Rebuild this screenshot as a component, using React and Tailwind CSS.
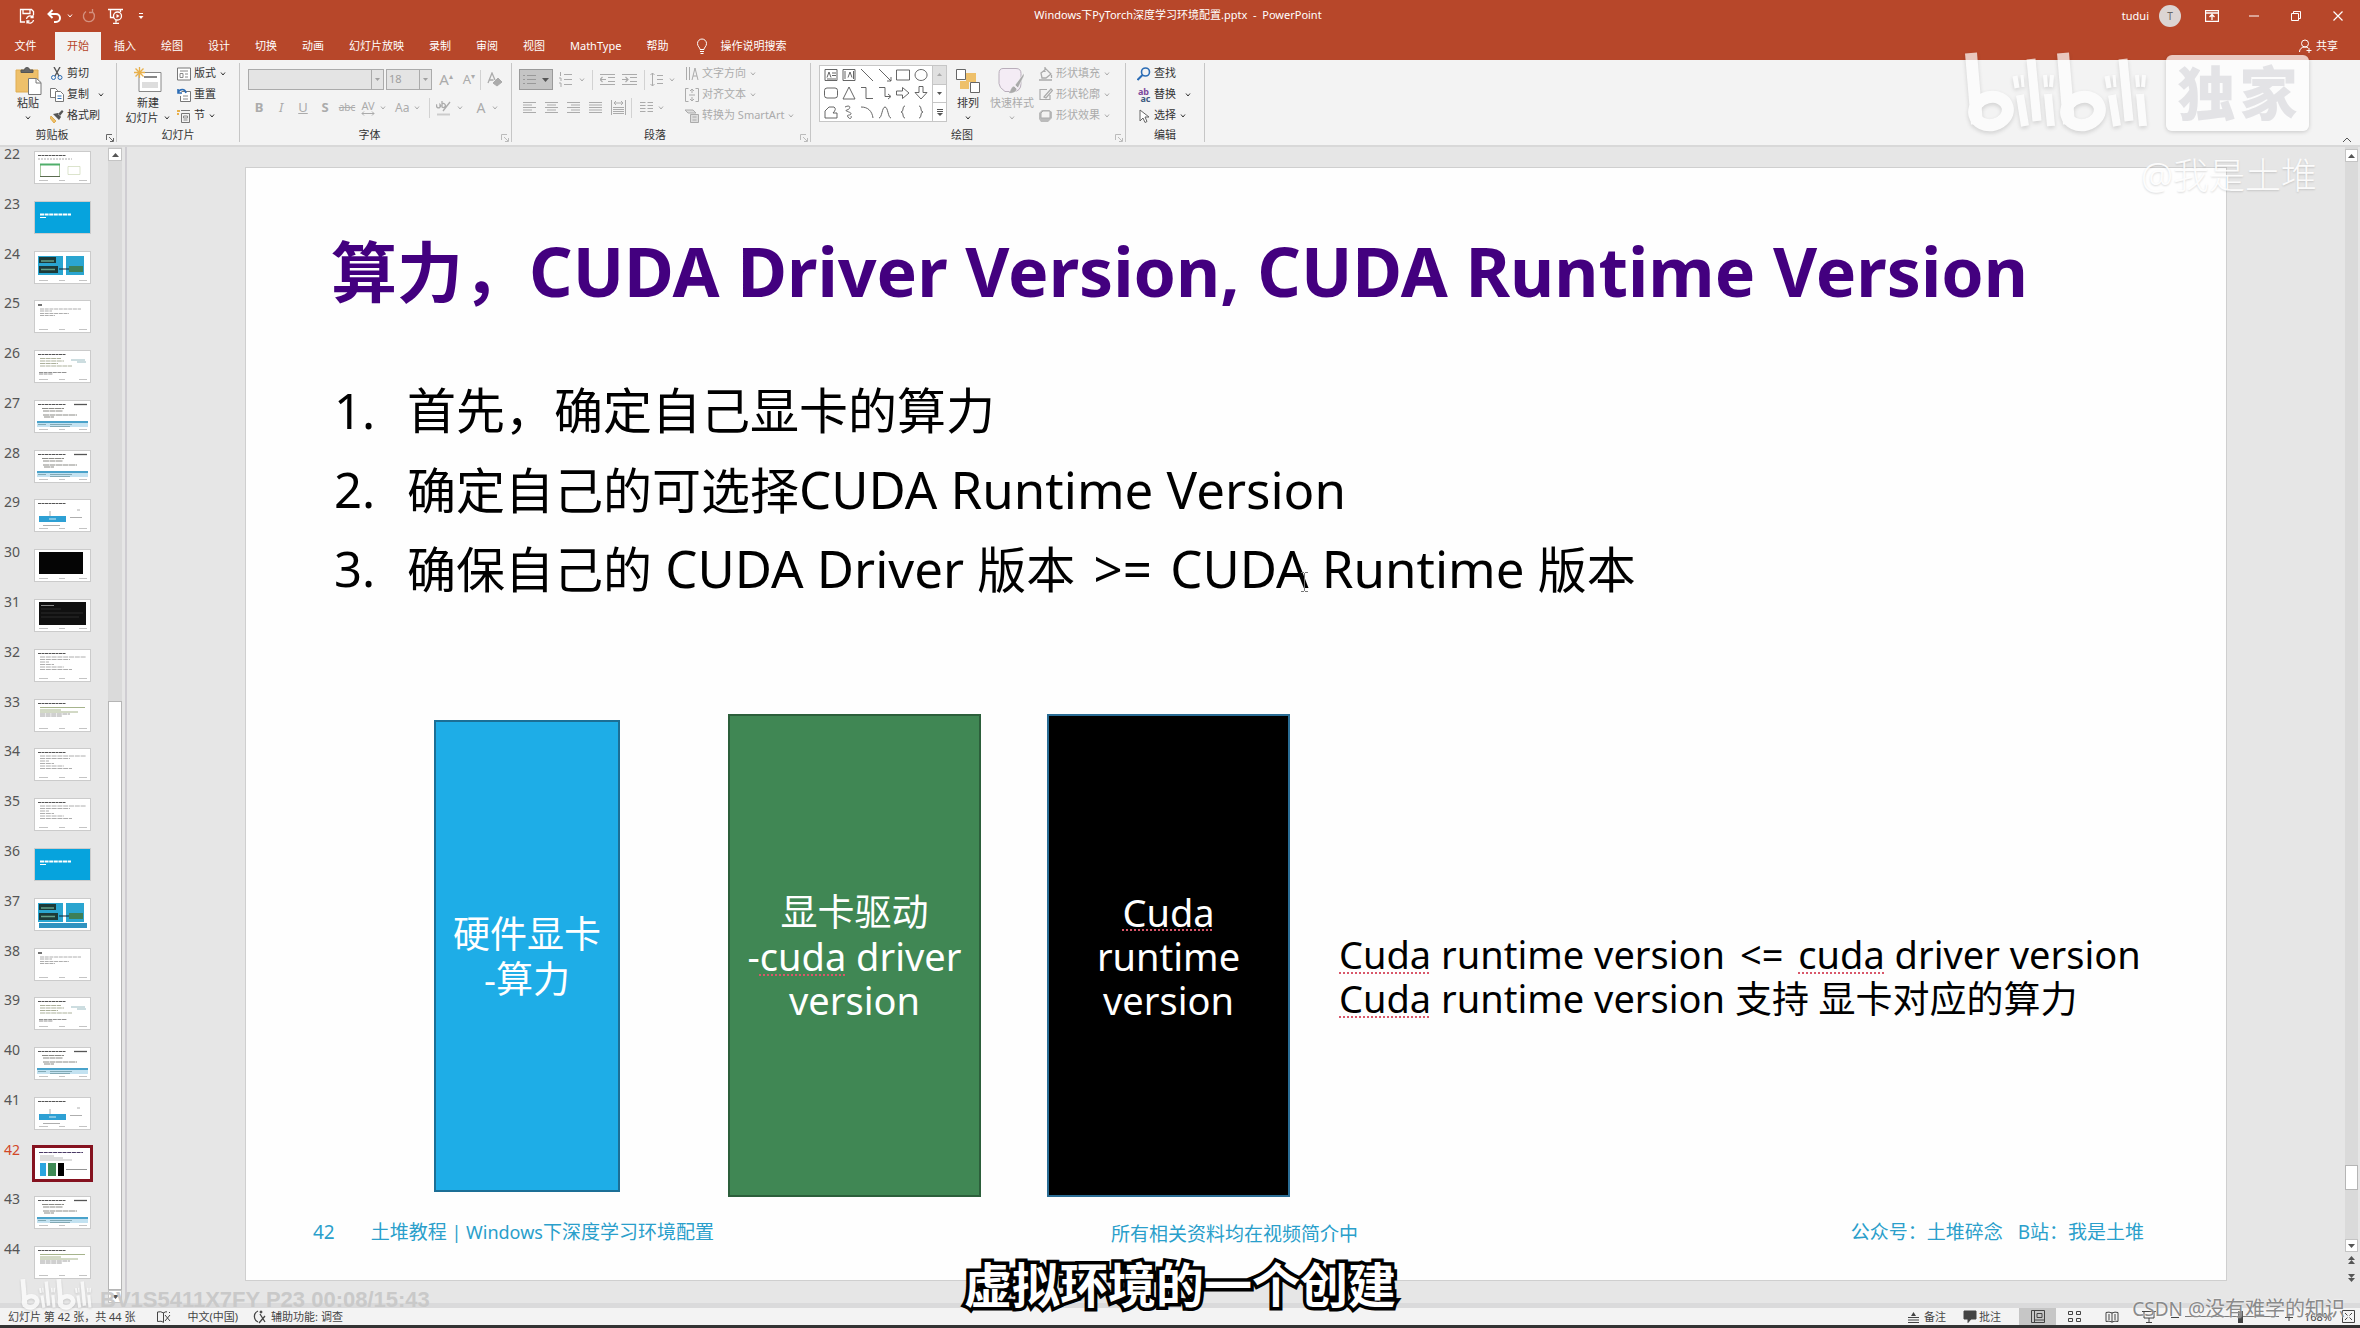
import clsx from 'clsx'

const TABS = ['插入', '绘图', '设计', '切换', '动画', '幻灯片放映', '录制', '审阅', '视图', 'MathType', '帮助']

const SLIDES = [
  [22, 'sheet'], [23, 'cover'], [24, 'arch'], [25, 'short'], [26, 'note'], [27, 'table'], [28, 'table'], [29, 'box'],
  [30, 'black'], [31, 'console'], [32, 'text'], [33, 'green'], [34, 'text'], [35, 'text'], [36, 'cover'], [37, 'archTable'],
  [38, 'short'], [39, 'note'], [40, 'table'], [41, 'box'], [42, 'current'], [43, 'table'], [44, 'green'],
]

function Icon({ w = 14, h = 14, vb, className, children }) {
  return (
    <svg
      width={w}
      height={h}
      viewBox={vb || `0 0 ${w} ${h}`}
      className={clsx('shrink-0', className)}
      fill="none"
      stroke="currentColor"
      strokeWidth="1"
      aria-hidden="true"
    >
      {children}
    </svg>
  )
}

function Chevron({ className }) {
  return (
    <Icon w={8} h={6} className={className}>
      <path d="M2 1.500 4 4l2-2.500" />
    </Icon>
  )
}

/* ---------- title bar ---------- */

function TitleBar() {
  return (
    <header className="relative flex h-8 items-center bg-[#b7472a] text-[11px] text-white">
      <div className="flex items-center pl-[19px]">
        <button aria-label="保存">
          <Icon w={16} h={16}>
            <path d="M6 14H1.500V1.500h11L14.500 3.500V7M4 1.500v4h7v-4" strokeWidth="1.300" />
            <path d="M7.500 11a3.500 3.500 0 0 1 6-2M14 7v2.500h-2.500M14.500 12a3.500 3.500 0 0 1-6 2M8 15.500V13h2.500" strokeWidth="1.300" />
          </Icon>
        </button>
        <button aria-label="撤消" className="ml-3 flex items-center gap-1">
          <Icon w={15} h={14}>
            <path d="M5.500 1 1.500 5l4 4M2 5h7a4 4 0 0 1 0 8H7" strokeWidth="2" />
          </Icon>
          <Chevron />
        </button>
        <button aria-label="重复" className="ml-2 opacity-40">
          <Icon w={14} h={14}>
            <path d="M4 2.500a5.500 5.500 0 1 0 6.500.5M10.500 0v3.500H7" strokeWidth="1.300" />
          </Icon>
        </button>
        <button aria-label="从头开始" className="ml-3">
          <Icon w={16} h={16}>
            <path d="M0 1.500h15M2.500 2v7.500H6M12.500 2v2M8 12v2.500M5 15.500h6" strokeWidth="1.300" />
            <circle cx="9.500" cy="8" r="4" strokeWidth="1.300" />
            <path d="m8.500 6 3 2-3 2z" fill="currentColor" stroke="none" />
          </Icon>
        </button>
        <button aria-label="自定义快速访问工具栏" className="ml-3">
          <Icon w={10} h={10}>
            <path d="M3 2.500h4" />
            <path d="M2.500 5h5L5 8z" fill="currentColor" stroke="none" />
          </Icon>
        </button>
      </div>
      <div className="pointer-events-none absolute inset-x-0 top-0 flex h-[30px] items-center justify-center pr-1 whitespace-pre">
        {'Windows下PyTorch深度学习环境配置.pptx  -  PowerPoint'}
      </div>
      <div className="mr-px ml-auto flex h-7 items-center">
        <span>tudui</span>
        <span className="mx-[10px] flex size-[22px] items-center justify-center rounded-full bg-[#dcd5d3] text-[10px] text-[#666]">T</span>
        <button aria-label="功能区显示选项" className="flex w-[42px] justify-center">
          <Icon w={14} h={12}>
            <path d="M.5.500h13v11H.500zM.500 3h13M7 10V5M4.500 7 7 4.500 9.500 7" strokeWidth="1.300" />
          </Icon>
        </button>
        <button aria-label="最小化" className="flex w-[42px] justify-center">
          <Icon w={10} h={10}><path d="M0 5h10" /></Icon>
        </button>
        <button aria-label="向下还原" className="flex w-[42px] justify-center">
          <Icon w={10} h={10}><path d="M.5 2.500h7v7h-7zM2.500 2V.500h7v7H8" /></Icon>
        </button>
        <button aria-label="关闭" className="flex w-[42px] justify-center">
          <Icon w={10} h={10}><path d="m.5.500 9 9m0-9-9 9" strokeWidth="1.200" /></Icon>
        </button>
      </div>
    </header>
  )
}

function TabBar() {
  return (
    <nav className="flex h-7 items-stretch bg-[#b7472a] text-[11px] text-white">
      <button className="w-[55px] pr-1">文件</button>
      <button className="bg-[#f3f2f1] px-3 text-[#b7472a]">开始</button>
      {TABS.map(t => (
        <button key={t} className="pr-3 pl-[13px]">{t}</button>
      ))}
      <button className="ml-4 flex items-center gap-3">
        <Icon w={12} h={16}>
          <path d="M4 11.500c0-2-2.500-3-2.500-6a4.500 4.500 0 0 1 9 0c0 3-2.500 4-2.500 6zM4 13.500h4M4.500 15.500h3" />
        </Icon>
        操作说明搜索
      </button>
      <button className="mr-[22px] ml-auto flex items-center gap-1">
        <Icon w={13} h={14}>
          <circle cx="6" cy="4.500" r="3.500" />
          <path d="M.5 13c0-3 2-5 5.500-5 1.500 0 2.500.4 3.300 1M7.500 11.500h5M10 9v5" />
        </Icon>
        共享
      </button>
    </nav>
  )
}

/* ---------- ribbon ---------- */

function Group({ label, launcher, dim, className, children }) {
  return (
    <section aria-label={label} className={clsx('relative my-[3px] flex shrink-0 flex-col border-r border-[#c6c6c6]', className)}>
      <div className="flex h-[65px] items-start">{children}</div>
      <div className={clsx('pt-px text-center leading-[15px] text-[#333]', launcher && 'pr-3')}>{label}</div>
      {launcher && (
        <button aria-label={`${label}设置`} className={clsx('absolute right-[2px] bottom-0', dim ? 'text-[#bbb]' : 'text-[#666]')}>
          <Icon w={8} h={8}><path d="M.5 6V.500H6M3 3l4 4M7.500 4v3.500H4" /></Icon>
        </button>
      )}
    </section>
  )
}

function BigButton({ icon, label, label2, dim, className }) {
  return (
    <button className={clsx('flex flex-col items-center pt-1 whitespace-nowrap', dim ? 'text-[#ababab]' : 'text-[#333]', className)}>
      <span className="flex h-7 items-center">{icon}</span>
      <span className="leading-4">{label}</span>
      <span className="flex h-[14px] items-center gap-1 leading-[14px]">
        {label2}
        <Chevron />
      </span>
    </button>
  )
}

function SmallButton({ icon, label, arrow, dim, far }) {
  return (
    <button className={clsx('flex h-[21px] items-center gap-[3px] whitespace-nowrap', dim ? 'text-[#ababab]' : 'text-[#333]')}>
      <span className="flex w-[15px] justify-center">{icon}</span>
      {label}
      {arrow && <Chevron className={far && 'ml-[5px]'} />}
    </button>
  )
}

function Combo({ label, value, className }) {
  return (
    <div className={clsx('relative h-[21px]', className)}>
      <select aria-label={label} disabled className="size-full appearance-none border border-[#ababab] bg-[#e4e4e4] pl-[2px] text-[11px] text-[#a0a0a0]">
        <option>{value}</option>
      </select>
      <span className="pointer-events-none absolute inset-y-0 right-0 flex w-[13px] items-center justify-center border border-[#ababab] text-[#a0a0a0]">
        <Icon w={5} h={3}><path d="M0 0h5L2.500 3z" fill="currentColor" stroke="none" /></Icon>
      </span>
    </div>
  )
}

function Sep({ className }) {
  return <span className={clsx('h-5 w-px bg-[#d2d2d2]', className)} />
}

function Tool({ label, className, children }) {
  return (
    <button aria-label={label} className={clsx('flex h-[21px] shrink-0 items-center justify-center', className)}>
      {children}
    </button>
  )
}

function Lines({ rows, w = 14 }) {
  return (
    <Icon w={w} h={13}>
      {rows.map(([x, len], i) => <path key={i} d={`M${x} ${1.5 + i * 2.5}h${len}`} />)}
    </Icon>
  )
}

function ClipboardGroup() {
  return (
    <Group label="剪贴板" launcher className="w-[117px]">
      <BigButton
        className="ml-3 w-8"
        label="粘贴"
        icon={
          <Icon w={27} h={28}>
            <path d="M1 3h22v22H1z" fill="#eec06a" stroke="#e0ad52" />
            <path d="M6 5.500V3h3.500a2.500 2.500 0 0 1 5 0H18v2.500z" fill="#666" stroke="#555" />
            <path d="M13.500 11.500h8l4.500 4v12H13.500z" fill="#fff" stroke="#777" />
            <path d="M21 11.500V16h5" stroke="#777" />
          </Icon>
        }
      />
      <div className="ml-[5px] flex flex-col items-start">
        <SmallButton
          label="剪切"
          icon={
            <Icon>
              <path d="m4 0 5 9M10 0 5 9" stroke="#555" strokeWidth="1.400" />
              <circle cx="3.500" cy="10.500" r="2" stroke="#2b6cb5" />
              <circle cx="10" cy="10.500" r="2" stroke="#2b6cb5" />
            </Icon>
          }
        />
        <SmallButton
          label="复制"
          arrow
          far
          icon={
            <Icon>
              <path d="M.5.500h5l2 2v7h-7z" fill="#fff" stroke="#777" />
              <path d="M5.500 3.500h5l3 3v7h-8z" fill="#fff" stroke="#777" />
              <path d="M7.500 8h4M7.500 10.500h4" stroke="#2b6cb5" />
            </Icon>
          }
        />
        <SmallButton
          label="格式刷"
          icon={
            <Icon>
              <path d="m1 7 5 5-2 2-4-5z" fill="#eec06a" stroke="#e0ad52" />
              <path d="m3 5 6 6 2-3-3-4zM8 5l4-4 1.500 1.500L10 7z" fill="#555" stroke="none" />
            </Icon>
          }
        />
      </div>
    </Group>
  )
}

function SlidesGroup() {
  return (
    <Group label="幻灯片" className="w-[123px]">
      <BigButton
        className="ml-[9px] w-11"
        label="新建"
        label2="幻灯片"
        icon={
          <Icon w={28} h={28}>
            <path d="M5 5.500h22v19H5z" fill="#fff" stroke="#888" />
            <path d="M10 10h13" stroke="#888" strokeWidth="2" />
            <path d="M8 15h16v6H8z" fill="#ddd" stroke="none" />
            <path d="M5.500 0v11M0 5.500h11M1.500 1.500l8 8m0-8-8 8" stroke="#e8b04b" strokeWidth="1.300" />
          </Icon>
        }
      />
      <div className="ml-[6px] flex flex-col items-start">
        <SmallButton
          label="版式"
          arrow
          icon={
            <Icon>
              <path d="M.5 1h13v12H.500z" fill="#fff" stroke="#777" />
              <path d="M3 4h8M3 6.500h3v4H3zM8 7h3M8 10h3" stroke="#888" />
            </Icon>
          }
        />
        <SmallButton
          label="重置"
          icon={
            <Icon>
              <path d="M4.500 3.500h9v10h-10V8" fill="#fff" stroke="#777" />
              <path d="M1 4.500C3 .5 8 .5 9 5M1 1v4h4" stroke="#2b6cb5" strokeWidth="1.600" />
              <path d="M6 8h5M6 11h5" stroke="#888" />
            </Icon>
          }
        />
        <SmallButton
          label="节"
          arrow
          icon={
            <Icon>
              <path d="M4 1.500h9M4.500 4.500h8v9h-8z" stroke="#777" />
              <path d="M6.500 7h4v2h-4zM6.500 11h4" stroke="#888" />
              <path d="M0 2h3M0 5h2" stroke="#e8b04b" strokeWidth="2" />
            </Icon>
          }
        />
      </div>
    </Group>
  )
}

function FontGroup() {
  return (
    <Group label="字体" launcher dim className="w-[272px]">
      <div className="flex flex-col gap-[7px] pt-[6px] pl-2 text-[#ababab]">
        <div className="flex items-center">
          <Combo label="字体" value="" className="w-[136px]" />
          <Combo label="字号" value="18" className="ml-[2px] w-[46px]" />
          <Tool label="增大字号" className="ml-[6px] w-4 text-[15px]">A<sup className="text-[8px]">▴</sup></Tool>
          <Tool label="减小字号" className="ml-[7px] w-4 text-[13px]">A<sup className="text-[8px]">▾</sup></Tool>
          <Sep className="ml-[3px]" />
          <Tool label="清除格式" className="ml-[6px]">
            <Icon w={16} h={16}>
              <path d="m1 11 4-10 3 7M2.500 8h4" strokeWidth="1.300" />
              <path d="m6 11 5-5 4 4-5 4z" fill="currentColor" />
            </Icon>
          </Tool>
        </div>
        <div className="flex items-center text-[13px]">
          <Tool label="加粗" className="w-[22px] font-bold">B</Tool>
          <Tool label="倾斜" className="w-[22px] italic">I</Tool>
          <Tool label="下划线" className="w-[22px] underline">U</Tool>
          <Tool label="阴影" className="w-[22px] font-bold">S</Tool>
          <Tool label="删除线" className="w-[22px] text-[10px] line-through">abc</Tool>
          <Tool label="字符间距" className="ml-[3px] text-[11px]">
            <span className="flex flex-col items-center leading-[11px]">
              AV
              <Icon w={14} h={5}><path d="M1 2.500h12M3 .5 1 2.500l2 2M11 .5l2 2-2 2" /></Icon>
            </span>
            <Chevron className="ml-1" />
          </Tool>
          <Tool label="更改大小写" className="ml-2 text-[12px]">Aa<Chevron className="ml-1" /></Tool>
          <Sep className="ml-2" />
          <Tool label="突出显示" className="ml-[6px]">
            <Icon w={16} h={16}>
              <path d="M1 4.500a2 2 0 1 0 3 0v3M6 1v6a2 2 0 1 0 0-3M7 11l7-9" strokeWidth="1.300" />
              <path d="M1 14.500h13" strokeWidth="2" stroke="#ccc" />
            </Icon>
            <Chevron className="ml-1" />
          </Tool>
          <Tool label="字体颜色" className="ml-3 text-[14px]">A<Chevron className="ml-[6px]" /></Tool>
        </div>
      </div>
    </Group>
  )
}

function ParagraphGroup() {
  return (
    <Group label="段落" launcher dim className="w-[299px]">
      <div className="flex w-[166px] shrink-0 flex-col gap-[7px] pt-[6px] pl-[7px] text-[#ababab]">
        <div className="flex items-center">
          <Tool label="项目符号" className="w-[34px] gap-[5px] border border-[#9a9a9a] bg-[#c5c5c5] text-[#999]">
            <Icon w={14} h={13}><path d="M0 2.500h2M4 2.500h9M0 6.500h2M4 6.500h9M0 10.500h2M4 10.500h9" /></Icon>
            <Icon w={7} h={4}><path d="M0 0h7L3.500 4z" fill="#555" stroke="none" /></Icon>
          </Tool>
          <Tool label="编号" className="ml-[6px] gap-[5px]">
            <Icon w={14} h={15}><path d="M1.500 0v4M0 6h2v3M0 11h2v4M5 2.500h8M5 7.500h8M5 12.500h8" /></Icon>
            <Chevron />
          </Tool>
          <Sep className="ml-[6px]" />
          <Tool label="减少缩进" className="ml-[7px]">
            <Icon w={15} h={13}><path d="M0 1.500h15M8 4.500h7M8 8.500h7M0 11.500h15M0 6.500h6M2.500 4 0 6.500 2.500 9" strokeWidth="1.200" /></Icon>
          </Tool>
          <Tool label="增加缩进" className="ml-[7px]">
            <Icon w={15} h={13}><path d="M0 1.500h15M8 4.500h7M8 8.500h7M0 11.500h15M0 6.500h6M3.500 4 6 6.500 3.500 9" strokeWidth="1.200" /></Icon>
          </Tool>
          <Sep className="ml-[7px]" />
          <Tool label="行距" className="ml-[5px] gap-1">
            <Icon w={14} h={15}><path d="M2.500 1v13M.5 3l2-2 2 2M.5 12l2 2 2-2M7 3.500h6M7 7.500h6M7 11.500h6" /></Icon>
            <Chevron />
          </Tool>
        </div>
        <div className="flex items-center">
          <Tool label="左对齐" className="w-[22px]"><Lines rows={[[0, 13], [0, 9], [0, 13], [0, 9], [0, 13]]} /></Tool>
          <Tool label="居中" className="w-[22px]"><Lines rows={[[0, 13], [2, 9], [0, 13], [2, 9], [0, 13]]} /></Tool>
          <Tool label="右对齐" className="w-[22px]"><Lines rows={[[0, 13], [4, 9], [0, 13], [4, 9], [0, 13]]} /></Tool>
          <Tool label="两端对齐" className="w-[22px]"><Lines rows={[[0, 13], [0, 13], [0, 13], [0, 13], [0, 13]]} /></Tool>
          <Tool label="分散对齐" className="w-[22px]">
            <Icon w={15} h={15}><path d="M.5 0v15M14.500 0v15M3 3h9M5 1 3 3l2 2M10 1l2 2-2 2M2 7.500h11M2 9.500h11M2 11.500h11M2 13.500h11" /></Icon>
          </Tool>
          <Sep className="ml-[2px]" />
          <Tool label="分栏" className="ml-2 gap-1">
            <Icon w={13} h={13}><path d="M0 1.500h5.500M7.500 1.500H13M0 4.500h5.500M7.500 4.500H13M0 7.500h5.500M7.500 7.500H13M0 10.500h5.500M7.500 10.500H13" /></Icon>
            <Chevron />
          </Tool>
        </div>
      </div>
      <div className="ml-[6px] flex flex-col items-start">
        <SmallButton dim arrow label="文字方向" icon={<Icon><path d="M1.500 0v13M4.500 0v13M7 13l3-12 3 12M8 9h4" /></Icon>} />
        <SmallButton dim arrow label="对齐文本" icon={<Icon><path d="M3.500.500h-3v13h3M10.500.500h3v13h-3M7 1v4M5 3l2-2 2 2M7 13V9M5 11l2 2 2-2M4 7h6" /></Icon>} />
        <SmallButton dim arrow label="转换为 SmartArt" icon={<Icon><path d="M0 1h8l3 3H3zM5.500 5.500h8v8h-8zM7.500 8h4M7.500 11h4" fill="#ddd" /></Icon>} />
      </div>
    </Group>
  )
}

const SHAPES = [
  ['文本框', 'M1 1.500h12v11H1zM3 9.500 5 4l2 5.500M8 5h4M8 7.500h4M3 11h9'],
  ['竖排文本框', 'M1 1.500h12v11H1zM6 9.500 8 4l2 5.500M3 3v8M11.500 3v8'],
  ['直线', 'm1 1 12 12'],
  ['箭头', 'm1 1 12 12M13 9v4H9'],
  ['矩形', 'M.5 2h13v10H.500z'],
  ['椭圆', 'M7 1.500a6 5.500 0 1 0 .1 0z'],
  ['圆角矩形', 'M3 2h8q2.500 0 2.500 2.500v5Q13.500 12 11 12H3Q.500 12 .500 9.500v-5Q.500 2 3 2z'],
  ['三角形', 'M7 1 13 13H1z'],
  ['肘形连接符', 'M1 1.500h5v11h7'],
  ['肘形箭头', 'M1 1.500h6v9h5M10 8l3 2.500-3 2.500'],
  ['右箭头', 'M.5 5h6V1.500L13 7l-6.500 5.500V9h-6z'],
  ['下箭头', 'M5 .5h4v6h4L7 13 1 6.500h4z'],
  ['任意多边形', 'M5 2 1 6v7h12V8H9q4-4 1-6z'],
  ['自由曲线', 'M3 2c6-3 6 2 2 3s5 2 4 4-5 0-3 3 4 1 3-1'],
  ['弧形', 'M1 2c7 0 11 4 12 11'],
  ['曲线', 'M1 13C4 13 4 2 7 2s3 11 6 11'],
  ['左大括号', 'M9 1C6 1 8 7 5 7c3 0 1 6 4 6'],
  ['右大括号', 'M5 1c3 0 1 6 4 6-3 0-1 6-4 6'],
]

function DrawingGroup() {
  return (
    <Group label="绘图" launcher dim className="w-[315px]">
      <div className="mt-[2px] ml-2 flex h-[57px] shrink-0 border border-[#c6c6c6] bg-white text-[#555]">
        <div className="grid grid-cols-[repeat(6,18px)] place-items-center px-[2px]">
          {SHAPES.map(([name, d]) => (
            <button key={name} aria-label={name}>
              <Icon><path d={d} strokeWidth=".9" /></Icon>
            </button>
          ))}
        </div>
        <div className="flex w-[14px] flex-col divide-y divide-[#c6c6c6] border-l border-[#c6c6c6]">
          <button aria-label="上一行" className="flex flex-1 items-center justify-center bg-[#e0e0e0] text-[#aaa]">
            <Icon w={5} h={3}><path d="M0 3h5L2.500 0z" fill="currentColor" stroke="none" /></Icon>
          </button>
          <button aria-label="下一行" className="flex flex-1 items-center justify-center">
            <Icon w={5} h={3}><path d="M0 0h5L2.500 3z" fill="currentColor" stroke="none" /></Icon>
          </button>
          <button aria-label="其他" className="flex flex-1 items-center justify-center">
            <Icon w={6} h={7}><path d="M0 .5h6M0 2.500h6" /><path d="M0 4h6L3 7z" fill="currentColor" stroke="none" /></Icon>
          </button>
        </div>
      </div>
      <BigButton
        className="ml-1 w-[34px]"
        label="排列"
        icon={
          <Icon w={26} h={26}>
            <path d="M11 5h10v9H11zM5 13h9v8H5z" fill="#eec06a" stroke="none" />
            <path d="M1.500 1.500h9v10h-9zM15.500 14.500h9v10h-9z" fill="#fff" stroke="#666" />
          </Icon>
        }
      />
      <BigButton
        dim
        className="ml-1 w-[46px]"
        label="快速样式"
        icon={
          <Icon w={28} h={28}>
            <path d="M5 1.500h13q5 0 5 5v10q0 8-8 8H7q-6-4-6-8v-10q0-5 4-5z" fill="#f4ecf5" stroke="#b9aebb" />
            <path d="m26 6-9 12 3 3 6-12zM16 19l3 3c-1 4-6 5-9 4 3-1 2-6 6-7z" fill="#aaa" stroke="#fff" strokeWidth=".5" />
          </Icon>
        }
      />
      <div className="ml-[3px] flex flex-col items-start">
        <SmallButton dim arrow label="形状填充" icon={<Icon><path d="m2 6 5-4 5 5-5 4H3zM6 0v5M12.500 8v3M0 13h13" strokeWidth="1.300" /></Icon>} />
        <SmallButton dim arrow label="形状轮廓" icon={<Icon><path d="M8 1.500H1v10h10V7M5 9l7-8 1.500 1.500L7 10z" strokeWidth="1.200" /></Icon>} />
        <SmallButton dim arrow label="形状效果" icon={<Icon><path d="M3 1h7l3 2v6l-4 4H2L0 10V4z" fill="#bbb" stroke="none" /><path d="M4 2h7v7H2V4z" fill="#f3f2f1" /></Icon>} />
      </div>
    </Group>
  )
}

function EditGroup() {
  return (
    <Group label="编辑" className="w-[79px]">
      <div className="ml-[10px] flex flex-col items-start">
        <SmallButton
          label="查找"
          icon={<Icon><circle cx="8.500" cy="5" r="4" stroke="#2b6cb5" strokeWidth="1.600" /><path d="m5.500 8-5 5" stroke="#2b6cb5" strokeWidth="2" /></Icon>}
        />
        <SmallButton
          label="替换"
          arrow
          far
          icon={
            <span className="flex flex-col text-[9px] leading-[7px] font-bold">
              <span className="text-[#7c4a9c]">ab</span>
              <span className="pl-1 text-[#3d5a80]">ac</span>
            </span>
          }
        />
        <SmallButton label="选择" arrow icon={<Icon><path d="M3 1v11l3-3 2 4.500 2-1L8 8h4z" fill="#fff" stroke="#666" /></Icon>} />
      </div>
    </Group>
  )
}

function Ribbon() {
  return (
    <div className="flex h-[87px] border-b-2 border-[#d8d8d8] bg-[#f3f3f3] text-[11px]">
      <ClipboardGroup />
      <SlidesGroup />
      <FontGroup />
      <ParagraphGroup />
      <DrawingGroup />
      <EditGroup />
      <button aria-label="折叠功能区" className="mt-auto mr-2 mb-[2px] ml-auto text-[#555]">
        <Icon w={10} h={6}><path d="m1 5 4-4 4 4" /></Icon>
      </button>
    </div>
  )
}

/* ---------- thumbnails ---------- */

const FOOT = <path d="M4 28.500h9M24 28.500h6M44 28.500h8" stroke="#aaa" strokeWidth=".7" />
const HEAD = <path d="M3 3.500h28" stroke="#555" strokeWidth="1.200" strokeDasharray="3 .5" />

const ARCH = (
  <>
    <path d="M3 4h25v19H3zM31 4h18v19H31z" fill="#2aa5d0" stroke="none" />
    <path d="M4 5h17v6H4zM4 14h19v7H4z" fill="#1c3a38" stroke="none" />
    <path d="M6 9h13M6 17.500h14" stroke="#63a18a" strokeWidth="1.500" />
    <path d="M34 14h14v6H34z" fill="#3d7f57" stroke="none" />
    <path d="M24 17h10" stroke="#123" />
  </>
)

const ART = {
  cover: (
    <>
      <path d="M0 0h55v31H0z" fill="#06a3dd" stroke="none" />
      <path d="M5 12.500h31" stroke="#fff" strokeWidth="1.800" strokeDasharray="4 .6" />
      <path d="M5 15.500h6" stroke="#fff" />
    </>
  ),
  sheet: (
    <>
      {HEAD}
      <path d="M3 7h34" stroke="#aaa" strokeDasharray="2 1" />
      <path d="M5.500 12.500h19v12h-19z" stroke="#a9c79f" />
      <path d="M5 12.500h20" stroke="#4fae6a" strokeWidth="2" />
      <path d="M5 24.500h20" stroke="#5b6b50" />
      <path d="M33 14.500h12v8H33z" stroke="#cdd8b8" strokeWidth=".7" />
      {FOOT}
    </>
  ),
  arch: <>{ARCH}{FOOT}</>,
  archTable: <>{ARCH}<path d="M4 24h48v5H4z" fill="#3093c0" stroke="none" /></>,
  short: (
    <>
      <path d="M3 4h4" stroke="#444" strokeWidth="1.500" />
      <path d="M5 8h41M5 10h12M5 12.500h29M5 14.500h15" stroke="#999" strokeWidth=".8" strokeDasharray="4 .7" />
      {FOOT}
    </>
  ),
  note: (
    <>
      {HEAD}
      <path d="M5 7.500h21M5 10h24M5 12.500h18M5 15h32" stroke="#a3a890" strokeWidth=".9" strokeDasharray="5 .6" />
      <path d="M36 9h14M42 11h9" stroke="#8fb3ba" strokeWidth=".9" />
      <path d="M4 21.500h28M4 23h14" stroke="#777" strokeWidth=".8" strokeDasharray="4 .6" />
      {FOOT}
    </>
  ),
  table: (
    <>
      {HEAD}
      <path d="M39 3.500h13" stroke="#555" strokeWidth="1.300" />
      <path d="M7 7.500h22M8 10h20M8 14h34M9 16h10" stroke="#8a8a85" strokeWidth="1" strokeDasharray="6 .5" />
      <path d="M2 20h51v2H2z" fill="#4aa3cb" stroke="none" />
      <path d="M2 22h51v4H2z" fill="#c3e2f1" stroke="none" />
      <path d="M3 23.500h8M15 23.500h22M15 25.500h20" stroke="#7ba3ad" strokeWidth=".9" />
      {FOOT}
    </>
  ),
  box: (
    <>
      {HEAD}
      <path d="M4 16h27v6H4z" fill="#2ea0d4" stroke="none" />
      <path d="M14 19h7" stroke="#fff" strokeWidth=".8" />
      <path d="M15 11v5M35 17.500h12M42 10h3M8 25.500h17" stroke="#999" strokeWidth=".8" />
      {FOOT}
    </>
  ),
  black: <><path d="M4 2h44v22H4z" fill="#050505" stroke="none" />{FOOT}</>,
  console: (
    <>
      <path d="M4 2h47v23H4z" fill="#101010" stroke="none" />
      <path d="M6 5.500h13" stroke="#aaa" strokeWidth=".8" />
      <path d="M6 9h20M6 13h42M6 17h38" stroke="#333" strokeWidth=".8" />
      {FOOT}
    </>
  ),
  text: (
    <>
      {HEAD}
      <path d="M5 7h46M5 9.500h30M5 12h9M5 14.500h14M5 17h24M5 19.500h32" stroke="#999" strokeWidth=".8" strokeDasharray="5 .8" />
      {FOOT}
    </>
  ),
  green: (
    <>
      {HEAD}
      <path d="M5 7.500h45M5 10h21M5 12h38" stroke="#a6b48c" strokeWidth="1" />
      <path d="M5 14h30M5 16h22" stroke="#888" strokeWidth=".8" strokeDasharray="5 .6" />
      {FOOT}
    </>
  ),
  current: (
    <>
      <path d="M4 4.500h44" stroke="#4b3a66" strokeWidth="1.100" strokeDasharray="4 .7" />
      <path d="M5 8h14M5 10h23M5 12h32" stroke="#aaa" strokeWidth=".8" />
      <path d="M5 15h6v13H5z" fill="#2aa5df" stroke="none" />
      <path d="M13 15h8v13h-8z" fill="#3f8a55" stroke="none" />
      <path d="M23 15h6v13h-6z" fill="#000" stroke="none" />
      <path d="M31 21.500h21" stroke="#888" strokeWidth=".9" />
    </>
  ),
}

function ScrollButton({ label, up, className }) {
  return (
    <button aria-label={label} className={clsx('flex h-[13px] w-full shrink-0 items-center justify-center border border-[#c4c4c4] bg-white text-[#555]', className)}>
      <Icon w={7} h={4}><path d={up ? 'M0 4h7L3.500 0z' : 'M0 0h7L3.500 4z'} fill="currentColor" stroke="none" /></Icon>
    </button>
  )
}

function SlideList() {
  return (
    <aside className="flex w-[127px] shrink-0 border-r-2 border-[#cfcdd2]">
      <ul className="flex flex-1 flex-col pb-[11px]">
        {SLIDES.map(([n, kind]) => (
          <li key={n} className="flex-1">
            <button className="flex w-full items-start pt-[2px] text-left">
              <span className={clsx('w-[35px] pl-1 text-[14px] leading-[10px]', kind === 'current' ? 'text-[#d24726]' : 'text-[#555]')}>{n}</span>
              <svg
                viewBox="0 0 55 31"
                fill="none"
                aria-hidden="true"
                className={clsx('mt-[3px] h-[31px] w-[55px] bg-white', kind === 'current' ? 'ring-3 ring-[#85121f]' : 'outline outline-[#cbcbcb]')}
              >
                {ART[kind]}
              </svg>
            </button>
          </li>
        ))}
      </ul>
      <div className="mr-[3px] flex w-[14px] flex-col bg-[#dadada] pt-px">
        <ScrollButton label="向上滚动" up />
        <div className="flex-1" />
        <div className="h-[51%] border border-[#b5b5b5] bg-white" />
        <ScrollButton label="向下滚动" />
      </div>
    </aside>
  )
}

/* ---------- slide ---------- */

// latin runs sit a touch larger than the CJK text around them
function En({ children }) {
  return <span className="text-[51px]">{children}</span>
}

function Cn({ children }) {
  return <span className="text-[37px]">{children}</span>
}

function Misspelt({ children }) {
  return (
    <span className="underline decoration-[#d9576a] decoration-dotted decoration-2 underline-offset-[3px] [text-decoration-skip-ink:none]">{children}</span>
  )
}

function Op({ children }) {
  return <span className="px-[5px]">{children}</span>
}

const BODY = [
  <>首先，确定自己显卡的算力</>,
  <>确定自己的可选择<En>CUDA Runtime Version</En></>,
  <>确保自己的<En> CUDA Driver </En>版本<En> <Op>&gt;=</Op> CUDA Runtime </En>版本</>,
]

function Slide() {
  return (
    <main className="relative mx-[118px] mt-5 mb-[22px] flex flex-1 flex-col border border-[#cfcfcf] bg-[#fefefe] text-black">
      <h1 className="pt-[63px] pl-[85px] text-[66px] leading-[80px] font-bold whitespace-nowrap text-[#43007f]">
        算力，<span className="text-[68px]">CUDA Driver Version, CUDA Runtime Version</span>
      </h1>
      <ol className="mt-[60px] pl-[88px] text-[49px] leading-[79px] whitespace-nowrap">
        {BODY.map((line, i) => (
          <li key={i} className="flex h-[79px]">
            <span className="w-[73px]">{i + 1}.</span>
            <span>{line}</span>
          </li>
        ))}
      </ol>

      <div className="mt-[106px] flex items-center pl-[188px] text-center text-[38px] leading-[44px] whitespace-nowrap text-white">
        <div className="flex h-[472px] w-[186px] items-center justify-center border-2 border-[#1c6f96] bg-[#1eade7]">
          <p><Cn>硬件显卡<br />-算力</Cn></p>
        </div>
        <div className="ml-[108px] flex h-[483px] w-[253px] items-center justify-center border-2 border-[#2c5f3b] bg-[#408754]">
          <p><Cn>显卡驱动</Cn><br />-<Misspelt>cuda</Misspelt> driver<br />version</p>
        </div>
        <div className="ml-[66px] flex h-[483px] w-[243px] items-center justify-center border-2 border-[#2a6d95] bg-black">
          <p><Misspelt>Cuda</Misspelt><br />runtime<br />version</p>
        </div>
        <p className="ml-[49px] pt-[42px] text-left text-black">
          <Misspelt>Cuda</Misspelt> runtime version <Op>&lt;=</Op> <Misspelt>cuda</Misspelt> driver version<br />
          <Misspelt>Cuda</Misspelt> runtime version <Cn>支持 显卡对应的算力</Cn>
        </p>
      </div>

      <footer className="mt-auto grid grid-cols-[1fr_auto_1fr] items-center pr-[70px] pb-[32px] pl-[67px] text-[19px] leading-7 text-[#2a9fcb]">
        <p><span className="mr-9">42</span>土堆教程<span className="text-[18px]"> | Windows</span>下深度学习环境配置</p>
        <p className="pt-1">所有相关资料均在视频简介中</p>
        <p className="pr-3 text-right whitespace-pre">{'公众号：土堆碎念   B站：我是土堆'}</p>
      </footer>

      {/* mouse pointer in text mode */}
      <Icon w={9} h={20} className="absolute top-[404px] left-[1054px] text-[#777]">
        <path d="M1 .5h3M5 .5h3M4.500 1v18M1 19.500h3M5 19.500h3" />
      </Icon>
    </main>
  )
}

function CanvasScroll() {
  return (
    <div className="mr-[2px] flex w-[13px] shrink-0 flex-col bg-[#dadada] pt-[2px]">
      <ScrollButton label="上移" up />
      <div className="flex-1" />
      <div className="h-[25px] border border-[#b5b5b5] bg-white" />
      <div className="h-[49px]" />
      <ScrollButton label="下移" />
      <div className="flex h-[51px] flex-col items-center gap-2 bg-[#e6e6e6] pt-1 text-[#555]">
        <button aria-label="上一张幻灯片">
          <Icon w={7} h={9}><path d="M0 4h7L3.500 0zM0 8h7L3.500 4z" fill="currentColor" stroke="none" /></Icon>
        </button>
        <button aria-label="下一张幻灯片">
          <Icon w={7} h={9}><path d="M0 1h7L3.500 5zM0 5h7L3.500 9z" fill="currentColor" stroke="none" /></Icon>
        </button>
      </div>
    </div>
  )
}

/* ---------- status bar ---------- */

function StatusBar() {
  return (
    <footer className="flex h-[25px] items-stretch border-t-[5px] border-b-[3px] border-t-[#dadadb] border-b-[#333] bg-[#f3f3f3] text-[11px] leading-[17px] text-[#444]">
      <span className="pl-2">幻灯片 第 42 张，共 44 张</span>
      <button aria-label="拼写检查" className="ml-[22px] flex items-center">
        <Icon w={14} h={12}><path d="M6.500 1.500v10M6.500 2Q4 0 .5 1v9.500q4-1 6 .8M6.500 2Q8 .5 10 .8M8 4l5 6m0-6-5 6M12.500 1v1" /></Icon>
      </button>
      <button className="ml-4">中文(中国)</button>
      <button className="ml-[14px] flex items-center gap-1">
        <Icon w={15} h={14}><path d="M6 1a6 6 0 0 0 0 11M8 4l5 8m0-6-6 7" strokeWidth="1.300" /><circle cx="9" cy="2" r="1" fill="currentColor" /></Icon>
        辅助功能: 调查
      </button>
      <div className="ml-auto flex items-stretch pr-[5px]">
        <button className="flex items-center gap-1">
          <Icon w={12} h={12}><path d="M0 6.500h11M0 9h11M0 11.500h11" /><path d="M3 5h5L5.500 1z" fill="currentColor" stroke="none" /></Icon>
          备注
        </button>
        <button className="ml-[17px] flex items-center gap-[2px]">
          <Icon w={14} h={13}><path d="M1 1h12v8H8l-3 3.500V9H1z" fill="currentColor" /></Icon>
          批注
        </button>
        <button aria-label="普通视图" className="ml-[18px] flex w-[37px] items-center justify-center bg-[#c6c6c6]">
          <Icon w={14} h={13}><path d="M.5.500h13v12H.500zM3.500 1v11M6 3.500h5v4H6zM4 10h9" /></Icon>
        </button>
        <button aria-label="幻灯片浏览" className="flex w-[37px] items-center justify-center">
          <Icon w={13} h={13}><path d="M.5 1.500h4v3h-4zM8.500 1.500h4v3h-4zM.5 8.500h4v3h-4zM8.500 8.500h4v3h-4z" /></Icon>
        </button>
        <button aria-label="阅读视图" className="flex w-[37px] items-center justify-center">
          <Icon w={14} h={12}><path d="M7 1.500v10M7 2Q4 .500 1 1.500v9q3-1 6 .5M7 2q3-1.500 6-.5v9q-3-1-6 .5M3 4h2M3 6h2M3 8h2M9 4h2M9 6h2M9 8h2" /></Icon>
        </button>
        <button aria-label="幻灯片放映" className="flex w-[37px] items-center justify-center">
          <Icon w={14} h={13}><path d="M0 1.500h14M2 2v6h10V2M7 8v4M4 12.500h6" /></Icon>
        </button>
        <div className="flex items-center gap-[6px] pl-1">
          <button aria-label="缩小"><Icon w={8} h={8}><path d="M0 4.500h8" /></Icon></button>
          <input
            type="range"
            aria-label="缩放"
            min="0"
            max="100"
            defaultValue="60"
            className="h-3 w-[94px] appearance-none bg-[linear-gradient(#777,#777)] bg-[length:100%_1px] bg-center bg-no-repeat [&::-webkit-slider-thumb]:h-3 [&::-webkit-slider-thumb]:w-[5px] [&::-webkit-slider-thumb]:appearance-none [&::-webkit-slider-thumb]:bg-[#444]"
          />
          <button aria-label="放大"><Icon w={8} h={8}><path d="M0 4.500h8M4 .500v8" /></Icon></button>
        </div>
        <button className="ml-[10px] w-[30px]">168%</button>
        <button aria-label="适应窗口" className="ml-[9px] flex items-center">
          <Icon w={13} h={13}><path d="M.5.500h12v12H.500zM3 3l2.500 2.500M10 3 7.500 5.500M3 10l2.500-2.500M10 10 7.500 7.500" /></Icon>
        </button>
      </div>
    </footer>
  )
}

/* ---------- video overlays ---------- */

function BiliLogo({ className }) {
  return (
    <svg viewBox="0 0 184 82" role="img" aria-label="bilibili" className={className} fill="none" stroke="currentColor">
      {[0, 92].map(x => (
        <g key={x} transform={`translate(${x} 0)`}>
          <line x1="7" y1="3" x2="13" y2="74" strokeWidth="12" />
          <ellipse cx="27" cy="61" rx="17" ry="14" transform="rotate(-14 27 61)" strokeWidth="12" />
          <line x1="51" y1="26" x2="53" y2="38" strokeWidth="5" />
          <line x1="58" y1="25" x2="59" y2="37" strokeWidth="3" />
          <line x1="56" y1="45" x2="61" y2="76" strokeWidth="8" />
          <line x1="67" y1="9" x2="73" y2="71" strokeWidth="9" />
          <line x1="81" y1="25" x2="82" y2="37" strokeWidth="4" />
          <line x1="88" y1="25" x2="87" y2="37" strokeWidth="4" />
          <line x1="84" y1="44" x2="87" y2="76" strokeWidth="8" />
        </g>
      ))}
    </svg>
  )
}

function Overlays() {
  return (
    <div className="pointer-events-none">
      <div className="absolute top-[50px] right-[51px] flex items-start gap-[18px]">
        <BiliLogo className="h-[82px] w-[184px] text-white opacity-70 drop-shadow-[0_2px_2px_rgba(0,0,0,0.2)]" />
        <div className="mt-[5px] flex h-[76px] w-[143px] items-center justify-center gap-1 rounded-md bg-white/70 text-[58px] leading-none font-black text-[#e3e3e6] shadow-[0_1px_4px_rgba(0,0,0,0.18)]">
          <span>独</span>
          <span>家</span>
        </div>
      </div>
      <div className="absolute top-[154px] right-[43px] text-[36px] leading-[44px] font-light text-white/90 text-shadow-[0_1px_2px_rgba(0,0,0,0.15)]">
        @我是土堆
      </div>
      <div className="absolute bottom-[18px] left-5 flex items-end gap-2">
        <BiliLogo className="h-8 w-[72px] text-white opacity-70 drop-shadow-[0_1px_1px_rgba(0,0,0,0.2)]" />
        <span className="[font-family:'Liberation_Sans',sans-serif] text-[22px] leading-5 font-bold text-[#c9c9c9]">BV1S5411X7FY P23 00:08/15:43</span>
      </div>
      <div className="absolute inset-x-0 bottom-[15px] text-center text-[48px] leading-[56px] font-bold text-white [-webkit-text-stroke:7px_#000] [paint-order:stroke_fill]">
        虚拟环境的一个创建
      </div>
      <div className="absolute right-[15px] bottom-[6px] text-[20px] leading-[26px] text-[#8a8a8a] text-shadow-[0_0_2px_#fff]">
        <span className="text-[19px]">CSDN @</span>没有难学的知识
      </div>
    </div>
  )
}

export default function App() {
  return (
    <div lang="zh-CN" className="relative flex h-screen flex-col overflow-hidden bg-[#e6e6e6] [font-family:'Noto_Sans','Noto_Sans_CJK_SC',sans-serif]">
      <TitleBar />
      <TabBar />
      <Ribbon />
      <div className="flex min-h-0 flex-1">
        <SlideList />
        <div className="flex min-w-0 flex-1 flex-col">
          <Slide />
        </div>
        <CanvasScroll />
      </div>
      <StatusBar />
      <Overlays />
    </div>
  )
}
